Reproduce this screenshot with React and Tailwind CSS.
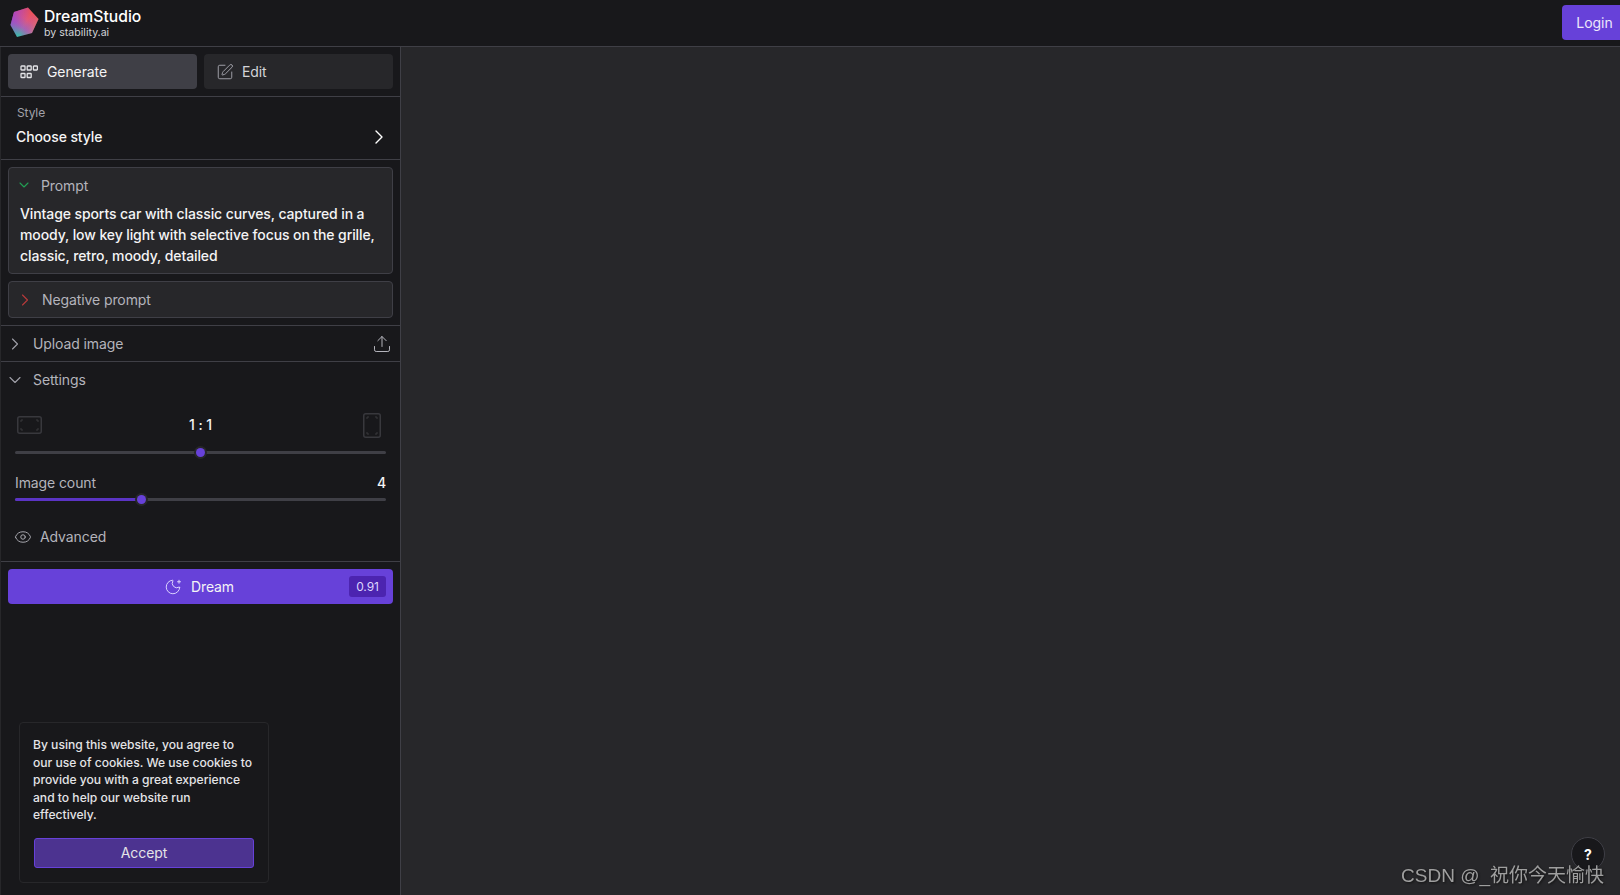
import React from 'react';
import { ChevronDown, ChevronRight, SquarePen, Upload, Eye, MoonStar } from 'lucide-react';

const Logo = () => (
    <svg width="30" height="31" viewBox="0 0 30 31" className="mt-px">
        <defs>
            <linearGradient id="logoGrad" x1="0.85" y1="0.1" x2="0.3" y2="0.95">
                <stop offset="0" stopColor="#f2504a" />
                <stop offset="0.4" stopColor="#e0587a" />
                <stop offset="0.7" stopColor="#a864b4" />
                <stop offset="1" stopColor="#3fb8a8" />
            </linearGradient>
            <linearGradient id="logoGrad2" x1="0" y1="0.2" x2="1" y2="0.8">
                <stop offset="0" stopColor="#a03fd0" stopOpacity="0.85" />
                <stop offset="0.55" stopColor="#a03fd0" stopOpacity="0" />
                <stop offset="1" stopColor="#e8b040" stopOpacity="0.55" />
            </linearGradient>
        </defs>
        <polygon points="18,0.5 28.5,12 22,26 7,30 0.5,18 4,5" fill="url(#logoGrad)" />
        <polygon points="18,0.5 28.5,12 22,26 7,30 0.5,18 4,5" fill="url(#logoGrad2)" />
    </svg>
);

// five squares icon on the Generate tab
const GenerateIcon = () => (
    <svg width="18" height="14" viewBox="0 0 18 14" fill="none" stroke="#e4e4e7" strokeWidth="1.3">
        <rect x="1" y="1" width="4" height="4" rx="0.6" />
        <rect x="7.2" y="1" width="4" height="4" rx="0.6" />
        <rect x="13.4" y="1" width="4" height="4" rx="0.6" />
        <rect x="1" y="8.5" width="4" height="4" rx="0.6" />
        <rect x="7.2" y="8.5" width="4" height="4" rx="0.6" />
    </svg>
);

const RatioIcon = ({ w, h }) => (
    <svg width={w} height={h} viewBox={`0 0 ${w} ${h}`} fill="none">
        <rect x="0.75" y="0.75" width={w - 1.5} height={h - 1.5} rx="2" stroke="#38383d" strokeWidth="1.5" />
        <path
            d={`M4 6V4H6 M${w - 6} 4H${w - 4}V6 M4 ${h - 6}V${h - 4}H6 M${w - 6} ${h - 4}H${w - 4}V${h - 6}`}
            stroke="#38383d"
            strokeWidth="1"
        />
    </svg>
);

const Slider = ({ fill, left }) => (
    <div className="relative h-[3px] mx-[14px] rounded-full bg-[#3f3f46]">
        <div className={`h-full rounded-full bg-[#5b34c4] ${fill}`} />
        <div className={`absolute top-[-3px] w-[9px] h-[9px] rounded-full bg-[#6741d9] ring-2 ring-[#27272a] ${left}`} />
    </div>
);

export default function App() {
    return (
        <div
            className="h-screen flex flex-col overflow-hidden bg-[#27272a] text-white"
            style={{ fontFamily: 'Inter, "Noto Sans CJK SC", sans-serif' }}
        >
            {/* Top bar */}
            <header className="h-[47px] shrink-0 flex items-start justify-between bg-[#18181b] border-b border-[#3f3f46] pl-[10px]">
                <div className="flex items-start gap-[4px] pt-[6px]">
                    <Logo />
                    <div className="flex flex-col pt-px">
                        <span className="text-[15.7px] leading-[19px] font-medium text-white">DreamStudio</span>
                        <span className="text-[10.6px] leading-[14px] text-[#d4d4d8]">by stability.ai</span>
                    </div>
                </div>
                <button className="mt-[5px] w-[58px] h-[35px] pl-[7px] rounded-l-[4px] bg-[#6741d9] text-[14px] text-[#ece8fb]">Login</button>
            </header>

            <div className="flex-1 flex min-h-0">
                {/* Sidebar */}
                <aside className="relative w-[400px] shrink-0 flex flex-col ml-px bg-[#18181b] border-r border-[#3f3f46] text-[14px] tracking-[-0.1px]">
                    <div className="flex gap-[7px] px-[7px] pt-[7px] pb-[7px] border-b border-[#3f3f46]">
                        <button className="w-[189px] h-[35px] flex items-center gap-[9px] pl-[12px] rounded-[4px] bg-[#3f3f46] text-[#f4f4f5]">
                            <GenerateIcon />
                            Generate
                        </button>
                        <button className="w-[189px] h-[35px] flex items-center gap-[8px] pl-[12px] rounded-[4px] bg-[#27272a] text-[#d4d4d8]">
                            <SquarePen size={18} strokeWidth={1.3} className="text-[#a1a1aa]" />
                            Edit
                        </button>
                    </div>

                    <div className="h-[63px] flex flex-col pt-[8px] px-[15px] border-b border-[#3f3f46]">
                        <span className="text-[12px] leading-[16px] mb-[6px] text-[#a1a1aa] pl-px">Style</span>
                        <div className="h-[20px] flex items-center justify-between leading-[20px] font-medium text-[#f4f4f5]">
                            Choose style
                            <ChevronRight size={24} strokeWidth={1.4} className="-mr-[6px] text-white" />
                        </div>
                    </div>

                    <div className="flex flex-col gap-[7px] px-[7px] py-[7px] border-b border-[#3f3f46]">
                        <div className="h-[107px] rounded-[4px] bg-[#27272a] border border-[#3f3f46] px-[11px] pt-[7px]">
                            <div className="flex items-center gap-[9px] h-[20px] text-[#b4b4bc]">
                                <ChevronDown size={16} strokeWidth={1.6} className="-ml-[4px] text-[#22a055]" />
                                <span>Prompt</span>
                            </div>
                            <p className="mt-[8px] leading-[21px] font-medium text-[#f4f4f5] whitespace-nowrap">
                                Vintage sports car with classic curves, captured in a
                                <br />
                                moody, low key light with selective focus on the grille,
                                <br />
                                classic, retro, moody, detailed
                            </p>
                        </div>
                        <div className="h-[37px] flex items-center gap-[7px] rounded-[4px] bg-[#27272a] border border-[#3f3f46] pl-[6px] text-[#b4b4bc]">
                            <ChevronRight size={20} strokeWidth={1.3} className="text-[#b83a3a]" />
                            <span>Negative prompt</span>
                        </div>
                    </div>

                    <div className="h-[36px] flex items-center justify-between pl-[4px] pr-[8px] border-b border-[#3f3f46] text-[#b4b4bc]">
                        <div className="flex items-center gap-[8px]">
                            <ChevronRight size={20} strokeWidth={1.3} className="text-[#a1a1aa]" />
                            <span>Upload image</span>
                        </div>
                        <Upload size={20} strokeWidth={1.2} className="text-[#b4b4bc]" />
                    </div>

                    <div className="flex flex-col h-[200px] border-b border-[#3f3f46]">
                        <div className="h-[35px] shrink-0 flex items-center gap-[8px] pl-[4px] text-[#b4b4bc]">
                            <ChevronDown size={20} strokeWidth={1.3} className="text-[#a1a1aa]" />
                            <span>Settings</span>
                        </div>
                        <div className="flex items-center justify-between h-[28px] mt-[14px] pl-[16px] pr-[19px]">
                            <RatioIcon w={25} h={18} />
                            <span className="-ml-[4px] -mt-[2px] font-medium text-[#f4f4f5]">1 : 1</span>
                            <RatioIcon w={18} h={25} />
                        </div>
                        <div className="mt-[12px]">
                            <Slider fill="w-0" left="left-[181px]" />
                        </div>
                        <div className="flex items-center justify-between h-[20px] mt-[18px] px-[14px] text-[#b4b4bc]">
                            <span>Image count</span>
                            <span className="font-medium text-[#f4f4f5]">4</span>
                        </div>
                        <div className="mt-[6px]">
                            <Slider fill="w-[123px]" left="left-[122px]" />
                        </div>
                        <div className="flex items-center gap-[8px] mt-[25px] pl-[13px] text-[#b4b4bc]">
                            <Eye size={18} strokeWidth={1.2} />
                            <span>Advanced</span>
                        </div>
                    </div>

                    <div className="px-[7px] pt-[7px]">
                        <button className="relative w-[385px] h-[35px] flex items-center justify-center gap-[9px] pr-[3px] rounded-[4px] bg-[#6741d9] text-[#f4f4f5]">
                            <MoonStar size={18} strokeWidth={1.3} className="text-[#ddd6fe]" />
                            Dream
                            <span className="absolute right-[7px] top-[7px] h-[21px] w-[37px] flex items-center justify-center rounded-[3px] bg-[#4c24b0] text-[12px] text-[#ddd6fe]">0.91</span>
                        </button>
                    </div>

                    {/* Cookie notice */}
                    <div className="absolute left-[18px] bottom-[12px] w-[250px] h-[161px] rounded-[4px] bg-[#18181b] border border-[#27272a] pl-[13px] pt-[13px] tracking-normal">
                        <p className="text-[12.1px] leading-[17.5px] font-medium text-[#e4e4e7] whitespace-nowrap">
                            By using this website, you agree to
                            <br />
                            our use of cookies. We use cookies to
                            <br />
                            provide you with a great experience
                            <br />
                            and to help our website run
                            <br />
                            effectively.
                        </p>
                        <button className="mt-[14px] ml-px w-[220px] h-[30px] rounded-[3px] bg-[#4c3390] border border-[#6741d9] text-[#e4e4e7] tracking-[-0.1px]">Accept</button>
                    </div>
                </aside>

                {/* Empty canvas */}
                <main className="flex-1 bg-[#27272a]" />
            </div>

            <div className="fixed right-[15px] bottom-[24px] w-[34px] h-[34px] rounded-full bg-[#18181b] border border-[#3f3f46] flex items-center justify-center text-[14px] font-bold text-white">?</div>
            <div className="fixed right-[16px] bottom-[7px] text-[19px] leading-[24px] text-[#9f9f9f] drop-shadow-[1px_1px_1px_#111]" style={{ fontFamily: '"Liberation Sans", "Noto Sans CJK SC", sans-serif' }}>
                CSDN @_祝你今天愉快
            </div>
        </div>
    );
}
